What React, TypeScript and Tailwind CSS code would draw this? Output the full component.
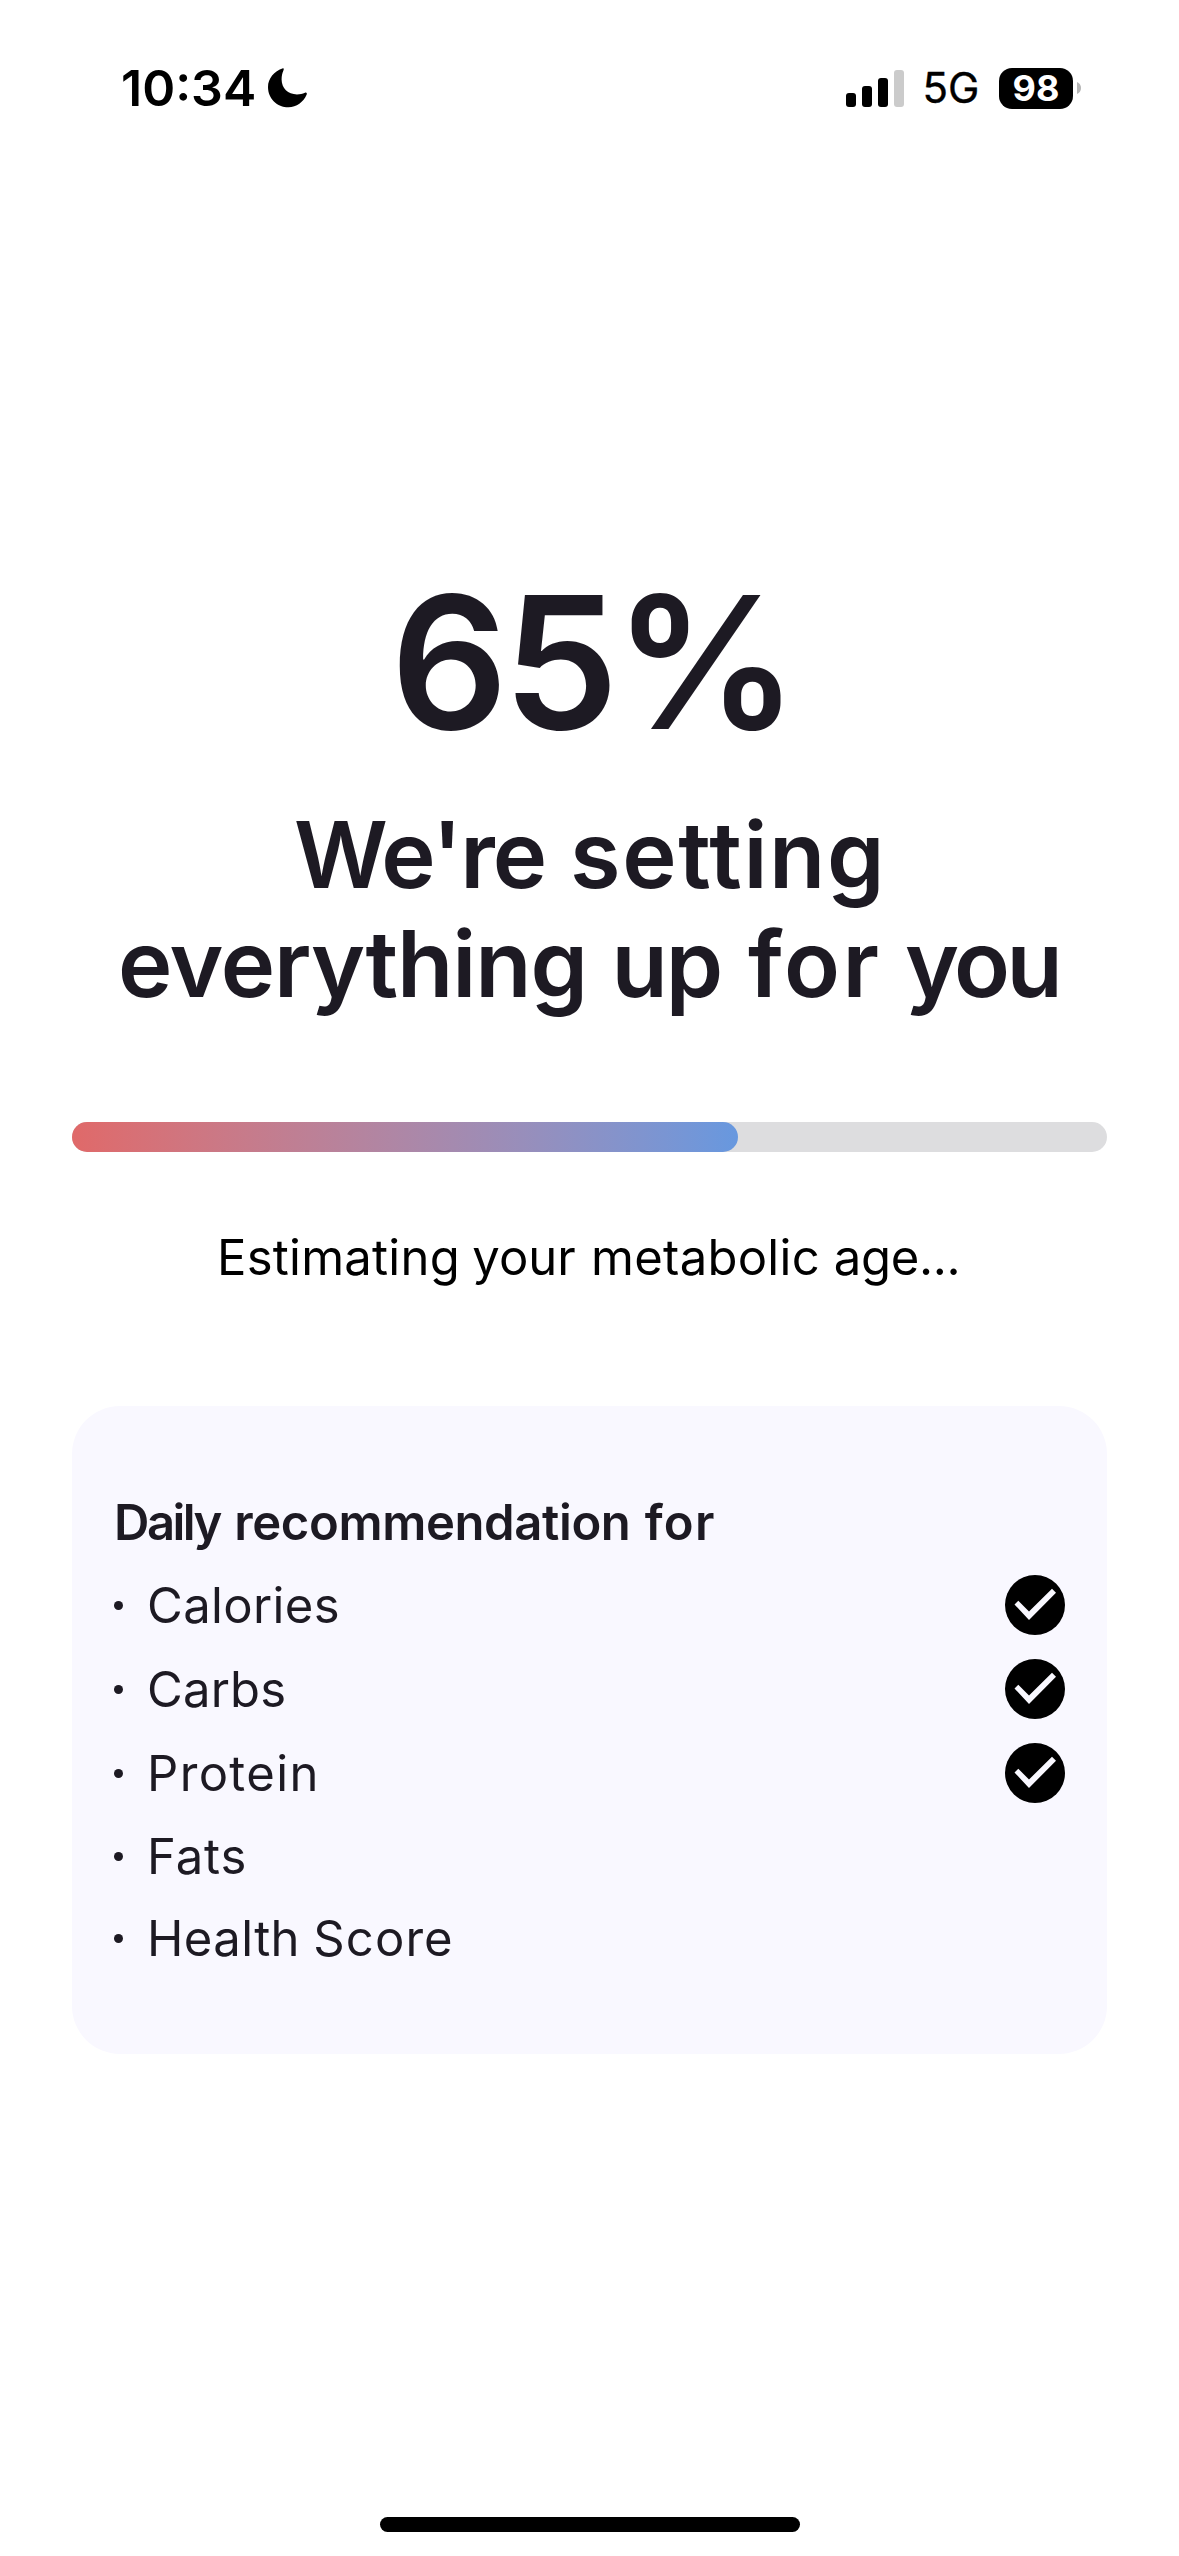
type Word = { text: string; className: string };

const headline: Word[][] = [
  [
    { text: "We're", className: "tracking-[-1.9px]" },
    { text: "setting", className: "ml-[24.7px] tracking-[1.6px]" },
  ],
  [
    { text: "everything", className: "tracking-[-1.1px]" },
    { text: "up", className: "ml-[24.6px] tracking-[-2px]" },
    { text: "for", className: "ml-[26.8px] tracking-[2.5px]" },
    { text: "you", className: "ml-[23.4px] tracking-[-3.5px]" },
  ],
];

const status: Word[] = [
  { text: "Estimating", className: "tracking-[0.24px]" },
  { text: "your", className: "ml-[12.4px]" },
  { text: "metabolic", className: "ml-[15.3px] tracking-[0.28px]" },
  { text: "age...", className: "ml-[13.8px] tracking-[-0.3px]" },
];

const cardTitle: Word[] = [
  { text: "Daily", className: "tracking-[-2.5px]" },
  { text: "recommendation", className: "ml-[14.3px] tracking-[-0.38px]" },
  { text: "for", className: "ml-[14.3px] tracking-[1.2px]" },
];

const items: { words: Word[]; done: boolean }[] = [
  { words: [{ text: "Calories", className: "tracking-[0.35px]" }], done: true },
  { words: [{ text: "Carbs", className: "tracking-[0.2px]" }], done: true },
  { words: [{ text: "Protein", className: "tracking-[1.35px]" }], done: true },
  { words: [{ text: "Fats", className: "tracking-[0.9px]" }], done: false },
  {
    words: [
      { text: "Health", className: "tracking-[0.4px]" },
      { text: "Score", className: "ml-[13.3px] tracking-[1.1px]" },
    ],
    done: false,
  },
];

function Words({ words }: { words: Word[] }) {
  return (
    <span className="flex whitespace-nowrap">
      {words.map((word) => (
        <span key={word.text} className={word.className}>
          {word.text}
        </span>
      ))}
    </span>
  );
}

function Moon() {
  return (
    <svg className="ml-3 h-10 w-10" viewBox="0 0 40 40" fill="black">
      <path d="M15 .3C6 3.5 0 10.5 0 19C0 30.5 9 39.3 20.5 39.3C28.5 39.3 35.5 34 38.7 26.5C39.2 25 38.3 24.2 37 24.7C34.5 25.8 32 26.4 29 26.4C20 26.4 13.6 20 13.6 11.5C13.6 8 14.3 5 15.6 2C16 .8 15.6 0 15 .3Z" />
    </svg>
  );
}

function Check() {
  return (
    <svg className="h-[60px] w-[60px]" viewBox="0 0 60 60">
      <circle cx="30" cy="30" r="30" fill="black" />
      <path d="M9.5 29.5L13.3 25.7L24 36.5L47 13.7L51 17.7L24 45Z" fill="#f9f8ff" />
    </svg>
  );
}

function StatusBar() {
  return (
    <header className="flex h-[176px] items-center justify-between pr-[98px] pl-[121px] text-black">
      <div className="flex items-center">
        <span className="text-[50px] leading-none font-semibold">10:34</span>
        <Moon />
      </div>
      <div className="flex items-center">
        <div className="flex h-[37px] items-end gap-1.5">
          <div className="h-3.5 w-2.5 rounded-[3px] bg-black" />
          <div className="h-[21px] w-2.5 rounded-[3px] bg-black" />
          <div className="h-[29px] w-2.5 rounded-[3px] bg-black" />
          <div className="h-[37px] w-2.5 rounded-[3px] bg-[#cbcbcb]" />
        </div>
        <span className="ml-[18.5px] w-[76.5px] text-[42px] leading-none [-webkit-text-stroke:0.4px_black]">5G</span>
        <div className="flex h-[41px] w-[74px] items-center justify-center rounded-[13px] bg-black text-[36px] leading-none font-bold text-white">
          98
        </div>
        <svg className="ml-1 h-3 w-1" viewBox="0 0 4 12" fill="#b5b5b5">
          <path d="M0 0C2.5 1 4 3.3 4 6S2.5 11 0 12Z" />
        </svg>
      </div>
    </header>
  );
}

export default function App() {
  return (
    <div className="flex h-[2556px] w-[1179px] flex-col bg-white font-['Inter',sans-serif] text-[#1d1a23]">
      <StatusBar />
      <main className="flex flex-1 flex-col px-[72px] pt-[394px]">
        <div className="pl-[5px] text-center text-[184px] leading-none font-semibold tracking-[-5px] whitespace-nowrap">
          65%
        </div>
        <h1 className="mt-[46px] text-[92px] leading-[109px] font-semibold">
          <div className="pl-[222px]">
            <Words words={headline[0]} />
          </div>
          <div className="pl-[46px]">
            <Words words={headline[1]} />
          </div>
        </h1>
        <div className="mt-[104px] h-[30px] rounded-full bg-[#dddddf]">
          <div className="h-full w-[666px] rounded-full bg-linear-to-r from-[#e06969] to-[#6798df]" />
        </div>
        <p className="mt-[76px] pl-[145px] text-[49px] leading-[60px] text-black">
          <Words words={status} />
        </p>
        <section className="mt-[118px] h-[648px] rounded-[48px] bg-[#f9f8ff] px-[42px] pt-[87px] text-[49px]">
          <h2 className="mb-2.5 leading-[60px] font-semibold">
            <Words words={cardTitle} />
          </h2>
          <ul>
            {items.map((item) => (
              <li
                key={item.words[0].text}
                className={item.done ? "flex h-[84px] items-center" : "flex h-[82px] items-center"}
              >
                <span className="mr-6 h-[9px] w-[9px] rounded-full bg-[#1d1a23]" />
                <span className="flex-1 pt-0.5 leading-[60px]">
                  <Words words={item.words} />
                </span>
                {item.done && <Check />}
              </li>
            ))}
          </ul>
        </section>
      </main>
      <div className="mb-6 h-[15px] w-[420px] self-center rounded-full bg-black" />
    </div>
  );
}
